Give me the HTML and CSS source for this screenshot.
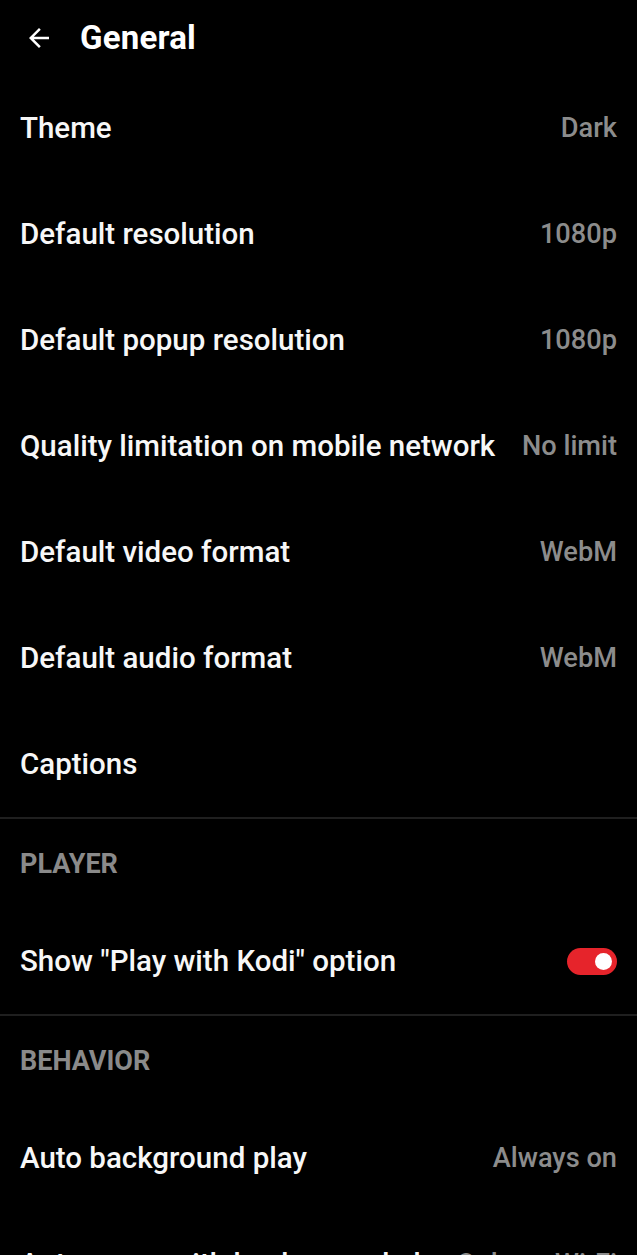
FILE: index.html
```html
<!DOCTYPE html>
<html lang="en">
<head>
  <meta charset="UTF-8" />
  <title>General</title>
  <meta name="viewport" content="width=device-width, initial-scale=1.0" />
  <link rel="stylesheet" href="styles.css">
</head>
<body>
  <div class="toolbar">
    <svg class="back" width="30" height="30" viewBox="0 0 24 24">
      <path d="M20 11H7.83l5.59-5.59L12 4l-8 8 8 8 1.41-1.41L7.83 13H20v-2z" fill="#fff"/>
    </svg>
    <h1>General</h1>
  </div>

  <div class="list">
    <div class="row"><span class="title">Theme</span><span class="value">Dark</span></div>
    <div class="row"><span class="title">Default resolution</span><span class="value">1080p</span></div>
    <div class="row"><span class="title">Default popup resolution</span><span class="value">1080p</span></div>
    <div class="row"><span class="title">Quality limitation on mobile network</span><span class="value">No limit</span></div>
    <div class="row"><span class="title">Default video format</span><span class="value">WebM</span></div>
    <div class="row"><span class="title">Default audio format</span><span class="value">WebM</span></div>
    <div class="row"><span class="title">Captions</span></div>
  </div>

  <div class="divider"></div>
  <div class="section">PLAYER</div>
  <div class="list">
    <div class="row">
      <span class="title">Show "Play with Kodi" option</span>
      <span class="switch on"><span class="thumb"></span></span>
    </div>
  </div>

  <div class="divider"></div>
  <div class="section">BEHAVIOR</div>
  <div class="list">
    <div class="row"><span class="title">Auto background play</span><span class="value">Always on</span></div>
    <div class="row"><span class="title">Autoqueue with background play</span><span class="value">Only on Wi-Fi</span></div>
  </div>
</body>
</html>
```

FILE: styles.css
```css
* {
  box-sizing: border-box;
}

body {
  margin: 0;
  padding: 0;
  background: #000;
  color: #f5f5f5;
  font-family: Roboto, "Noto Sans", sans-serif;
  height: 100vh;
  overflow: hidden;
}

.toolbar {
  height: 75px;
  display: flex;
  align-items: center;
  padding: 0 0 0 24px;
}

.toolbar .back {
  margin-right: 26px;
}

.toolbar h1 {
  margin: 0;
  font-size: 33px;
  font-weight: 700;
  color: #fff;
  letter-spacing: 0.2px;
}

.row {
  height: 106px;
  display: flex;
  align-items: center;
  justify-content: space-between;
  padding: 0 20px;
}

.title {
  font-size: 29.5px;
  font-weight: 500;
  color: #f7f7f7;
  white-space: nowrap;
}

.value {
  font-size: 27.2px;
  font-weight: 500;
  color: #8c8c8c;
  white-space: nowrap;
}

.divider {
  height: 2px;
  background: #1f1f1f;
}

.section {
  height: 89px;
  display: flex;
  align-items: center;
  padding: 0 20px;
  font-size: 27px;
  font-weight: 700;
  color: #8a8a8a;
}

.switch {
  width: 50px;
  height: 27px;
  border-radius: 14px;
  background: #e6242b;
  display: flex;
  align-items: center;
  justify-content: flex-end;
  padding-right: 5px;
}

.switch .thumb {
  width: 17px;
  height: 17px;
  border-radius: 50%;
  background: #fff;
}
```
